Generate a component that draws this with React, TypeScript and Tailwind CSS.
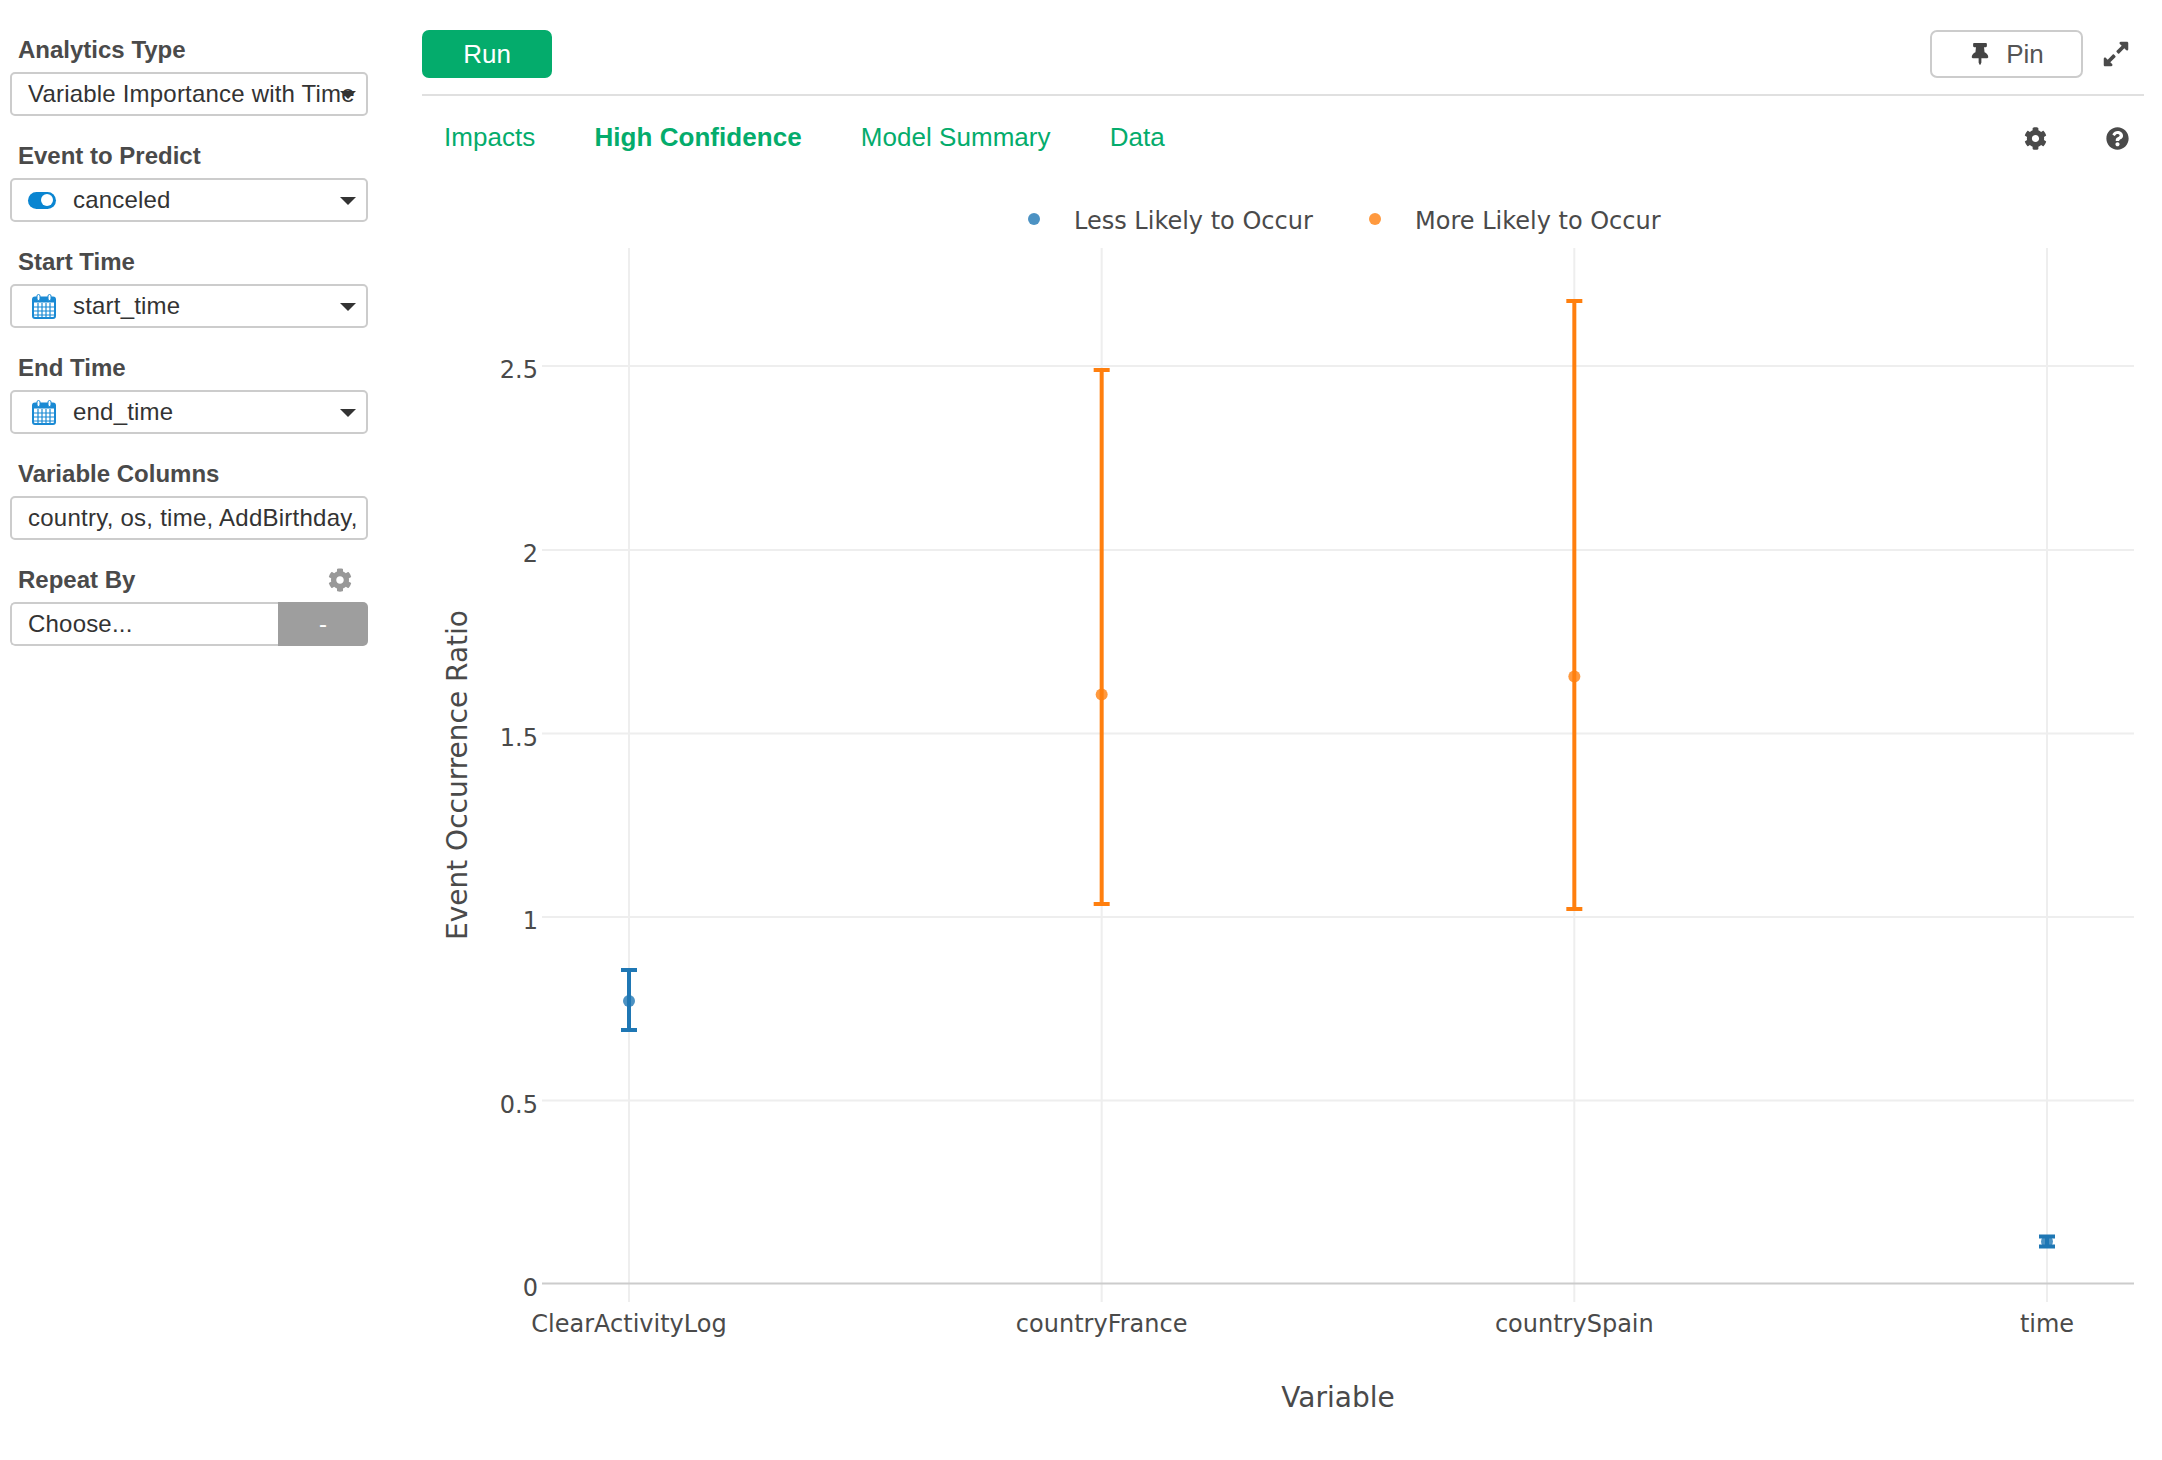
import { FaCog, FaExpandAlt, FaQuestionCircle, FaThumbtack } from 'react-icons/fa'

const tabs = ['Impacts', 'High Confidence', 'Model Summary', 'Data']
const columns = [629, 1101.67, 1574.33, 2047]
const rows = [
  { label: '0.5', y: 1100.5 },
  { label: '1', y: 917 },
  { label: '1.5', y: 733.5 },
  { label: '2', y: 550 },
  { label: '2.5', y: 366 },
]
const bars = [
  { name: 'ClearActivityLog', x: columns[0], top: 970, bottom: 1030, dot: 1001, color: '#1f77b4' },
  { name: 'countryFrance', x: columns[1], top: 370, bottom: 904, dot: 694.5, color: '#ff7f0e' },
  { name: 'countrySpain', x: columns[2], top: 301, bottom: 909, dot: 676.5, color: '#ff7f0e' },
  { name: 'time', x: columns[3], top: 1236.5, bottom: 1246.5, dot: 1241.5, color: '#1f77b4' },
]

function Caret() {
  return <span className="absolute right-[10px] top-[17px] h-0 w-0 border-x-[8px] border-t-[8px] border-x-transparent border-t-[#333]" />
}

function CalendarIcon() {
  return (
    <svg width="24" height="25" viewBox="0 0 24 25" className="ml-[4px] shrink-0">
      <rect x="1" y="3.5" width="22" height="20.5" rx="2" fill="#fff" stroke="#1a8ad4" strokeWidth="2" />
      <rect x="1" y="3.5" width="22" height="5" fill="#1a8ad4" />
      <path d="M2 13h20M2 17h20M2 21h20M6 9v14M10 9v14M14 9v14M18 9v14" stroke="#1a8ad4" strokeWidth="1.2" />
      <rect x="5" y="0.5" width="3" height="6" rx="1.5" fill="#fff" stroke="#1a8ad4" strokeWidth="1" />
      <rect x="16" y="0.5" width="3" height="6" rx="1.5" fill="#fff" stroke="#1a8ad4" strokeWidth="1" />
    </svg>
  )
}

function Field({ label, children }: { label: string; children: React.ReactNode }) {
  return (
    <div className="mb-[26px]">
      <div className="mb-[8px] pl-[8px] text-[24px] leading-[28px] font-bold text-[#4a4a4a]">{label}</div>
      {children}
    </div>
  )
}

function Select({ value, icon }: { value: string; icon?: React.ReactNode }) {
  return (
    <div className="relative flex h-[44px] w-[358px] items-center overflow-hidden rounded-[5px] border-2 border-[#ccc] pl-[16px] text-[24px] tracking-[0.2px] whitespace-nowrap text-[#333]">
      {icon ? <span className="flex w-[45px] shrink-0 items-center">{icon}</span> : null}
      {value}
      <Caret />
    </div>
  )
}

function Chart() {
  return (
    <svg width="1740" height="1282" viewBox="422 178 1740 1282" className="block font-['DejaVu_Sans',sans-serif]">
      <circle cx="1034" cy="219" r="6" fill="#1f77b4" fillOpacity="0.8" />
      <text x="1074" y="228.5" className="fill-[#4a4a4a] text-[24px]">Less Likely to Occur</text>
      <circle cx="1375" cy="219" r="6" fill="#ff7f0e" fillOpacity="0.8" />
      <text x="1415" y="228.5" className="fill-[#4a4a4a] text-[24px]">More Likely to Occur</text>

      {columns.map((x) => (
        <line key={x} x1={x} x2={x} y1="248" y2="1302" stroke="#eee" strokeWidth="2" />
      ))}
      {rows.map((r) => (
        <g key={r.label}>
          <line x1="542" x2="2134" y1={r.y} y2={r.y} stroke="#eee" strokeWidth="2" />
          <text x="538" y={r.y + 12} textAnchor="end" className="fill-[#4a4a4a] text-[24px]">{r.label}</text>
        </g>
      ))}
      <line x1="542" x2="2134" y1="1283.5" y2="1283.5" stroke="#ccc" strokeWidth="2" />
      <text x="538" y="1296" textAnchor="end" className="fill-[#4a4a4a] text-[24px]">0</text>

      {bars.map((b) => (
        <g key={b.name}>
          <path
            d={`M${b.x - 8} ${b.top}H${b.x + 8}M${b.x} ${b.top}V${b.bottom}M${b.x - 8} ${b.bottom}H${b.x + 8}`}
            stroke={b.color}
            strokeWidth="4"
            fill="none"
          />
          <circle cx={b.x} cy={b.dot} r="6" fill={b.color} fillOpacity="0.8" />
          <text x={b.x} y="1331.5" textAnchor="middle" className="fill-[#4a4a4a] text-[24px]">{b.name}</text>
        </g>
      ))}

      <text x="1338" y="1407" textAnchor="middle" className="fill-[#4a4a4a] text-[28px]">Variable</text>
      <text
        x="467"
        y="775"
        textAnchor="middle"
        transform="rotate(-90 467 775)"
        className="fill-[#4a4a4a] text-[28px]"
      >
        Event Occurrence Ratio
      </text>
    </svg>
  )
}

export default function App() {
  return (
    <div className="flex h-[1460px] w-[2162px] overflow-hidden bg-white font-['Liberation_Sans',Arial,sans-serif]">
      {/* Sidebar */}
      <aside className="w-[422px] shrink-0 pt-[36px] pl-[10px]">
        <Field label="Analytics Type">
          <Select value="Variable Importance with Time" />
        </Field>
        <Field label="Event to Predict">
          <Select
            value="canceled"
            icon={
              <span className="flex h-[17px] w-[28px] items-center justify-end rounded-full bg-[#0a85d1] pr-[3px]">
                <span className="h-[12px] w-[12px] rounded-full bg-white" />
              </span>
            }
          />
        </Field>
        <Field label="Start Time">
          <Select value="start_time" icon={<CalendarIcon />} />
        </Field>
        <Field label="End Time">
          <Select value="end_time" icon={<CalendarIcon />} />
        </Field>
        <Field label="Variable Columns">
          <div className="flex h-[44px] w-[358px] items-center overflow-hidden rounded-[5px] border-2 border-[#ccc] pl-[16px] text-[24px] tracking-[0.25px] whitespace-nowrap text-[#333]">
            country, os, time, AddBirthday,
          </div>
        </Field>
        <div>
          <div className="mb-[8px] flex h-[28px] w-[358px] items-center justify-between pr-[16px] pl-[8px]">
            <span className="text-[24px] font-bold text-[#4a4a4a]">Repeat By</span>
            <FaCog className="text-[24px] text-[#999]" />
          </div>
          <div className="flex h-[44px] w-[358px] overflow-hidden rounded-[5px] text-[24px]">
            <div className="flex flex-1 items-center rounded-l-[5px] border-2 border-r-0 border-[#ccc] pl-[16px] tracking-[0.2px] text-[#333]">Choose...</div>
            <div className="flex w-[90px] items-center justify-center bg-[#9e9e9e] text-white">-</div>
          </div>
        </div>
      </aside>

      {/* Main */}
      <main className="min-w-0 flex-1">
        <div className="mr-[18px] box-content flex h-[64px] items-start justify-between border-b-2 border-[#e0e0e0] pt-[30px]">
          <button className="h-[48px] w-[130px] rounded-[7px] bg-[#04ac6c] text-[26px] text-white">Run</button>
          <div className="flex items-center">
            <button className="flex h-[48px] w-[153px] items-center justify-center gap-[15px] rounded-[7px] border-2 border-[#ccc] text-[26px] text-[#555]">
              <FaThumbtack className="text-[22px] text-[#444]" />
              Pin
            </button>
            <FaExpandAlt className="mr-[14px] ml-[19px] text-[28px] text-[#4a4a4a]" />
          </div>
        </div>

        <div className="flex h-[82px] items-center pl-[22px] text-[26px] tracking-[0.05px] text-[#04ac6c]">
          <div className="flex gap-[59px]">
            {tabs.map((tab) => (
              <span key={tab} className={tab === 'High Confidence' ? 'font-bold' : ''}>
                {tab}
              </span>
            ))}
          </div>
          <div className="ml-auto flex translate-y-[1px] items-center gap-[59px] pr-[33px] text-[23px] text-[#4a4a4a]">
            <FaCog />
            <FaQuestionCircle />
          </div>
        </div>

        <Chart />
      </main>
    </div>
  )
}
